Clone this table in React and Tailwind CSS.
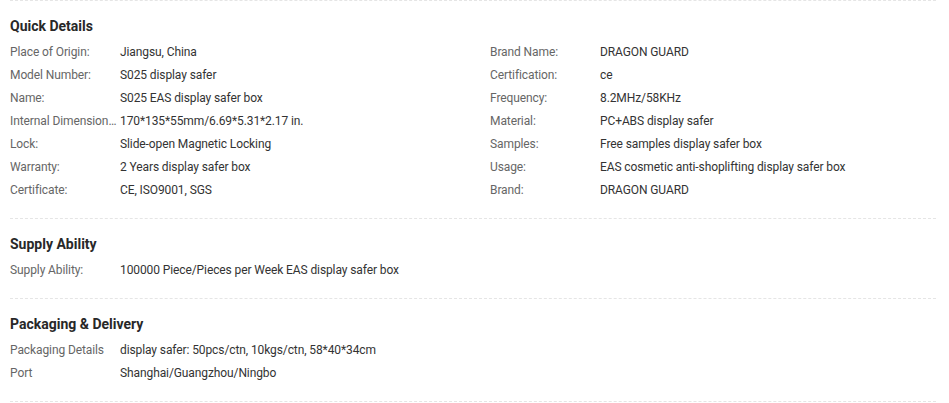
const quick = [
  ["Place of Origin:", "Jiangsu, China", "Brand Name:", "DRAGON GUARD"],
  ["Model Number:", "S025 display safer", "Certification:", "ce"],
  ["Name:", "S025 EAS display safer box", "Frequency:", "8.2MHz/58KHz"],
  ["Internal Dimension(mm):", "170*135*55mm/6.69*5.31*2.17 in.", "Material:", "PC+ABS display safer"],
  ["Lock:", "Slide-open Magnetic Locking", "Samples:", "Free samples display safer box"],
  ["Warranty:", "2 Years display safer box", "Usage:", "EAS cosmetic anti-shoplifting display safer box"],
  ["Certificate:", "CE, ISO9001, SGS", "Brand:", "DRAGON GUARD"],
];

const Row = ({ label, value }) => (
  <div className="flex h-[23px] items-center text-[12px] tracking-[-0.1px]">
    <span className="mr-[2px] w-[108px] shrink-0 truncate text-[#666]">{label}</span>
    <span className="text-[#333]">{value}</span>
  </div>
);

const Section = ({ title, children }) => (
  <section className="border-b border-dashed border-[#e5e5e5] pt-[15px] pb-[17px]">
    <h3 className="mb-1 h-5 text-[14px] leading-5 font-bold text-[#282828]">{title}</h3>
    {children}
  </section>
);

export default function App() {
  return (
    <div className="min-h-screen bg-white font-['Roboto',sans-serif]">
      <div className="ml-[10px] w-[926px] border-t border-dashed border-[#e5e5e5]">
        {/* Quick Details */}
        <Section title="Quick Details">
          <div className="grid grid-cols-[480px_1fr]">
            {quick.map((r, i) => [
              <Row key={`l${i}`} label={r[0]} value={r[1]} />,
              <Row key={`r${i}`} label={r[2]} value={r[3]} />,
            ])}
          </div>
        </Section>

        {/* Supply Ability */}
        <Section title="Supply Ability">
          <Row label="Supply Ability:" value="100000 Piece/Pieces per Week EAS display safer box" />
        </Section>

        {/* Packaging & Delivery */}
        <Section title="Packaging & Delivery">
          <Row label="Packaging Details" value="display safer: 50pcs/ctn, 10kgs/ctn, 58*40*34cm" />
          <Row label="Port" value="Shanghai/Guangzhou/Ningbo" />
        </Section>
      </div>
    </div>
  );
}
